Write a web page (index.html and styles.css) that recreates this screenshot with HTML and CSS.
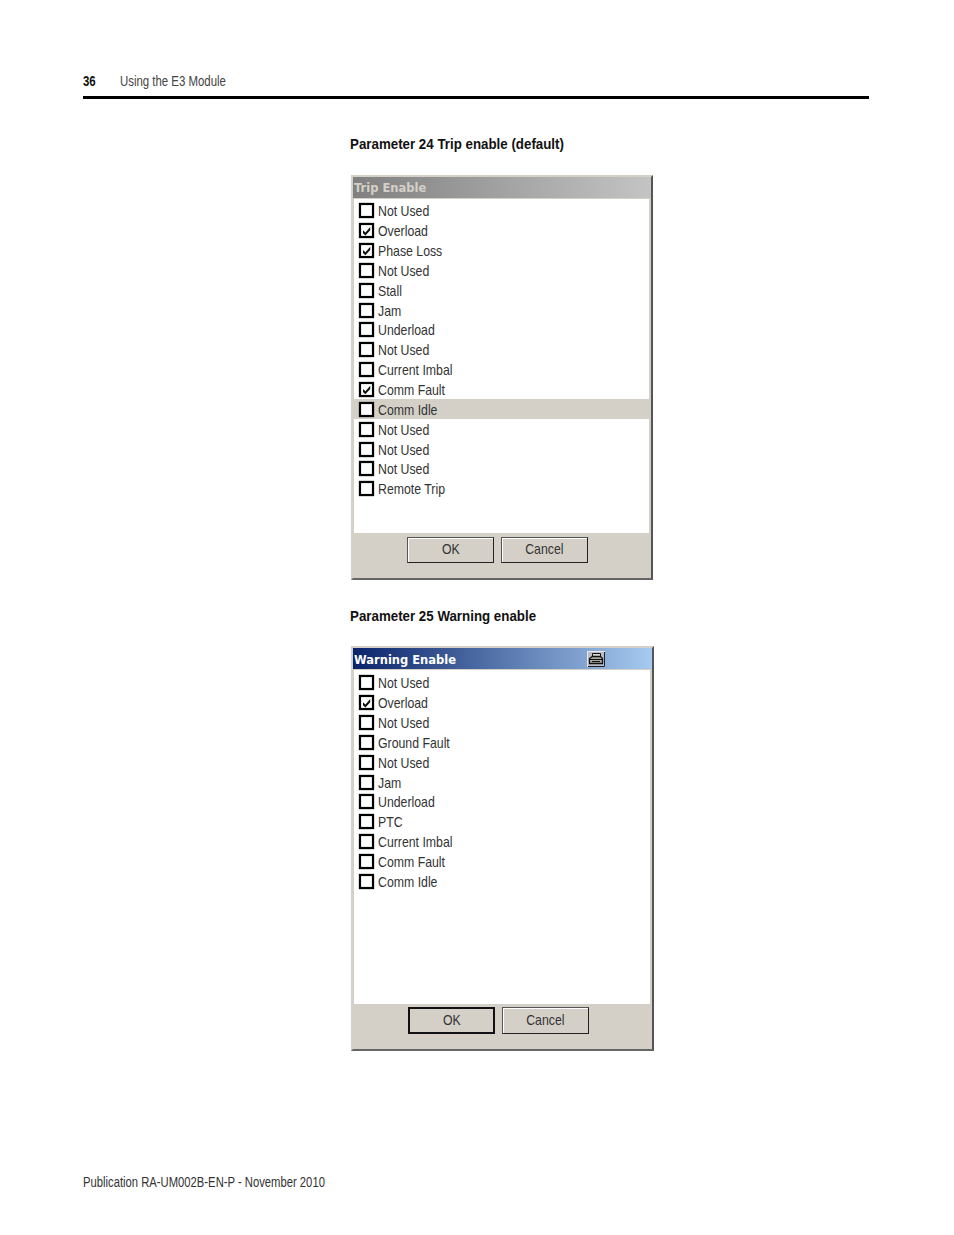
FILE: index.html
```html
<!DOCTYPE html>
<html lang="en">
<head>
<meta charset="utf-8">
<title>Using the E3 Module</title>
<link rel="stylesheet" href="styles.css">
</head>
<body>
<div class="page">
  <header class="head"><b class="num"><span class="nt">36</span></b><span class="nt">Using the E3 Module</span></header>
  <main class="col">
    <h2 class="cap"><span class="cn">Parameter 24 Trip enable (default)</span></h2>
    <section class="dlg">
      <div class="title off"><span class="tt">Trip Enable</span></div>
      <div class="list">
        <div class="row"><i class="box"></i><span class="rt">Not Used</span></div>
        <div class="row"><i class="box on"></i><span class="rt">Overload</span></div>
        <div class="row"><i class="box on"></i><span class="rt">Phase Loss</span></div>
        <div class="row"><i class="box"></i><span class="rt">Not Used</span></div>
        <div class="row"><i class="box"></i><span class="rt">Stall</span></div>
        <div class="row"><i class="box"></i><span class="rt">Jam</span></div>
        <div class="row"><i class="box"></i><span class="rt">Underload</span></div>
        <div class="row"><i class="box"></i><span class="rt">Not Used</span></div>
        <div class="row"><i class="box"></i><span class="rt">Current Imbal</span></div>
        <div class="row"><i class="box on"></i><span class="rt">Comm Fault</span></div>
        <div class="row sel"><i class="box"></i><span class="rt">Comm Idle</span></div>
        <div class="row"><i class="box"></i><span class="rt">Not Used</span></div>
        <div class="row"><i class="box"></i><span class="rt">Not Used</span></div>
        <div class="row"><i class="box"></i><span class="rt">Not Used</span></div>
        <div class="row"><i class="box"></i><span class="rt">Remote Trip</span></div>
      </div>
      <div class="btns"><span class="btn"><span class="bt">OK</span></span><span class="btn"><span class="bt">Cancel</span></span></div>
    </section>
    <h2 class="cap second"><span class="cn">Parameter 25 Warning enable</span></h2>
    <section class="dlg two">
      <div class="title act"><span class="tt">Warning Enable</span>
        <svg class="prn" viewBox="0 0 18 16" width="18" height="16"><rect x="0.5" y="0.5" width="17" height="15" fill="#b9bcc4" stroke="#e8e8e8"/><path d="M17.500 1v14.500H1" stroke="#222" fill="none"/><path d="M5.500 2.500h8v3h-8z" fill="#d8d8d0" stroke="#111"/><path d="M2.500 7.500l3-2h8l2 2v5h-13z" fill="#a9a9a2" stroke="#111" stroke-width="1.300"/><path d="M2.500 8.500h13M5 10.500h8" stroke="#111" fill="none"/></svg>
      </div>
      <div class="list">
        <div class="row"><i class="box"></i><span class="rt">Not Used</span></div>
        <div class="row"><i class="box on"></i><span class="rt">Overload</span></div>
        <div class="row"><i class="box"></i><span class="rt">Not Used</span></div>
        <div class="row"><i class="box"></i><span class="rt">Ground Fault</span></div>
        <div class="row"><i class="box"></i><span class="rt">Not Used</span></div>
        <div class="row"><i class="box"></i><span class="rt">Jam</span></div>
        <div class="row"><i class="box"></i><span class="rt">Underload</span></div>
        <div class="row"><i class="box"></i><span class="rt">PTC</span></div>
        <div class="row"><i class="box"></i><span class="rt">Current Imbal</span></div>
        <div class="row"><i class="box"></i><span class="rt">Comm Fault</span></div>
        <div class="row"><i class="box"></i><span class="rt">Comm Idle</span></div>
      </div>
      <div class="btns"><span class="btn def"><span class="bt">OK</span></span><span class="btn"><span class="bt">Cancel</span></span></div>
    </section>
  </main>
  <footer class="foot"><span class="nf">Publication RA-UM002B-EN-P - November 2010</span></footer>
</div>
</body>
</html>
```
FILE: styles.css
```css
* { box-sizing: border-box; }
html, body { margin: 0; background: #fff; }
.page {
  width: 954px; height: 1235px; padding: 74px 85px 45px 83px;
  display: flex; flex-direction: column;
  font-family: "Liberation Sans", sans-serif; color: #222;
}
.nt, .nf, .cn, .tt, .rt, .bt {
  display: inline-block; white-space: nowrap; transform-origin: 0 50%;
}
.nt { transform: scaleX(.815); }
.nf { transform: scaleX(.804); }
.cn { transform: scaleX(.888); }
.tt { transform: scaleX(.92); }
.rt { transform: scaleX(.82); }
.bt { transform: scaleX(.82); transform-origin: 50% 50%; }
.head {
  height: 25px; border-bottom: 3px solid #000; font-size: 14px; line-height: 15px;
  display: flex; color: #444;
}
.num { width: 37px; color: #111; }
.col { margin-left: 267px; width: 304px; }
.cap { margin: 36px 0 0; font-size: 15px; line-height: 17px; font-weight: bold; color: #111; }
.cap.second { margin-top: 27px; }
.dlg {
  margin: 23px 0 0 1px; width: 302px; height: 405px; background: #d4d0c8;
  border-top: 2px solid #d4d0c8; border-left: 2px solid #d4d0c8;
  border-right: 2px solid #555; border-bottom: 2px solid #666;
  display: flex; flex-direction: column;
}
.dlg.two { width: 303px; margin-top: 22px; }
.title {
  height: 21px; padding: 0 0 1px 1px; display: flex; align-items: center;
  font-family: "DejaVu Sans", sans-serif; font-size: 12.500px; font-weight: bold; color: #d4d0c8;
}
.title.off { background: linear-gradient(90deg, #808080, #c4c4c4); }
.title.act { background: linear-gradient(90deg, #0a246a, #a6caf0); color: #fff; position: relative; padding: 1px 0 0 1px; }
.prn { position: absolute; left: 234px; top: 3px; }
.list {
  height: 334px; margin: 1px 2px 0 1px; background: #fff; padding-top: 2px;
  font-size: 15px; color: #333;
}
.two .list { padding-top: 3px; }
.row { height: 19.850px; display: flex; align-items: center; padding-left: 5px; }
.row.sel { background: #d4d0c8; }
.box {
  width: 15px; height: 15px; border: 2px solid #000; background: #fff; margin-right: 4px;
  flex: none; position: relative; box-shadow: 0 0 1px #222, inset 0 0 1px #222;
}
.box.on::after {
  content: ""; position: absolute; inset: 0; background: #111;
  clip-path: polygon(18% 45%, 40% 66%, 84% 16%, 84% 45%, 40% 92%, 18% 72%);
}
.btns { display: flex; gap: 7px; padding: 4px 0 0 54px; }
.two .btns { padding: 3px 0 0 55px; }
.btn {
  width: 87px; height: 26px; border: 1px solid #555; padding-bottom: 3px;
  border-right-color: #222; border-bottom-color: #222; box-shadow: inset 1px 1px 0 #fff;
  display: flex; align-items: center; justify-content: center; font-size: 15px; color: #333;
}
.two .btn { height: 27px; }
.btn.def { border: 2px solid #111; box-shadow: none; }
.foot { margin-top: auto; font-size: 14px; line-height: 16px; color: #333; }
```
